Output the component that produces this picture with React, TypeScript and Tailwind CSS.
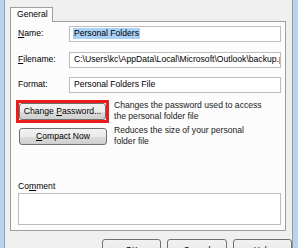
import React from "react";

function WinButton({ children, className = "" }: { children: React.ReactNode; className?: string }) {
  return (
    <div
      className={`flex items-center justify-center rounded-[3px] border border-[#707070] bg-[linear-gradient(to_bottom,#f2f2f2_0%,#ebebeb_50%,#dddddd_51%,#cfcfcf_100%)] text-[8.6px] leading-none text-black ${className}`}
    >
      <span className="whitespace-nowrap">{children}</span>
    </div>
  );
}

function Field({ label, value, selected = false, className = "" }: { label: React.ReactNode; value: string; selected?: boolean; className?: string }) {
  return (
    <div className={`flex items-center ${className}`}>
      <div className="w-[51px] text-[8.6px] leading-[11px] text-black">{label}</div>
      <div className="flex h-[16px] flex-1 items-center overflow-hidden whitespace-nowrap border border-[#bdbdbd] bg-white pl-[3px] text-[8.6px] leading-[11px] text-black">
        {selected ? <span className="bg-[#a9d1f5] px-[1px]">{value}</span> : <span className="pl-[1px]">{value}</span>}
      </div>
    </div>
  );
}

export default function App() {
  return (
    <div className="flex h-[248px] w-[298px] overflow-hidden bg-[#f0f0f0] font-['Liberation_Sans',Arial,sans-serif]">
      <div className="w-[4px] bg-[#b9d2ee]" />
      <div className="w-[1px] bg-[#8aa4c4]" />

      <div className="flex w-[287px] flex-col pl-[5px] pt-[7px]">
        {/* tab header */}
        <div className="relative z-10 -mb-[1px] flex h-[17px] w-[43px] items-center border border-b-0 border-[#9e9e9e] bg-[#fcfcfc] pb-[1px] pl-[6px] text-[8.6px] text-black">
          General
        </div>

        {/* tab panel */}
        <div className="flex w-[276px] flex-col border border-[#9e9e9e] bg-[#fcfcfc] pb-[5px] pl-[7px] pr-[4px] pt-[4px]">
          <Field label={<><span className="underline">N</span>ame:</>} value="Personal Folders" selected />
          <Field
            className="mt-[10px]"
            label={<><span className="underline">F</span>ilename:</>}
            value="C:\Users\kc\AppData\Local\Microsoft\Outlook\backup.pst"
          />
          <Field className="mt-[9px]" label="Format:" value="Personal Folders File" />

          <div className="mt-[7px] flex h-[23px] items-center">
            <div className="w-[96px]">
              <div className="-ml-[2px] h-[23px] w-[93px] border-[3px] border-[#ec1c1c]">
                <WinButton className="h-[17px] w-[87px]">
                  Change <span className="underline">P</span>assword...
                </WinButton>
              </div>
            </div>
            <div className="whitespace-nowrap text-[8.6px] leading-[11px] text-[#1a1a1a]">
              Changes the password used to access
              <br />
              the personal folder file
            </div>
          </div>

          <div className="mt-[5px] flex h-[17px] items-center">
            <div className="w-[96px]">
              <WinButton className="ml-[1px] h-[17px] w-[88px]">
                <span className="underline">C</span>ompact Now
              </WinButton>
            </div>
            <div className="whitespace-nowrap text-[8.6px] leading-[11px] text-[#1a1a1a]">
              Reduces the size of your personal
              <br />
              folder file
            </div>
          </div>

          <div className="mt-[36px] h-[11px] text-[8.6px] leading-[11px] text-black">
            Co<span className="underline">m</span>ment
          </div>
          <div className="mt-[1px] h-[32px] border border-[#bdbdbd] bg-white" />
        </div>

        {/* dialog buttons */}
        <div className="mt-[8px] flex gap-[6px] pl-[92px]">
          <WinButton className="h-[22px] w-[59px] border-[#3c7fb1] bg-[linear-gradient(to_bottom,#eaf6fd_0%,#d9f0fc_50%,#bee6fd_51%,#a7d9f5_100%)]">OK</WinButton>
          <WinButton className="h-[22px] w-[60px]">Cancel</WinButton>
          <WinButton className="h-[22px] w-[59px]">Help</WinButton>
        </div>
      </div>

      <div className="w-[1px] bg-[#9a9a9a]" />
      <div className="w-[5px] bg-[#b9d2ee]" />
    </div>
  );
}
